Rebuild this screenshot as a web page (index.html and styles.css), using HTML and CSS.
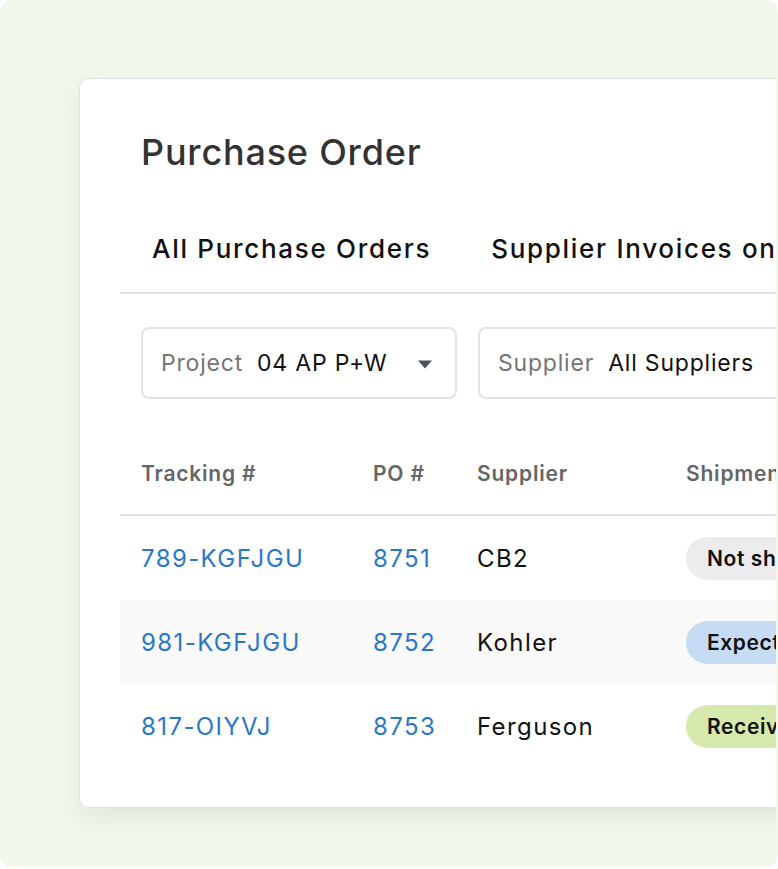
FILE: index.html
```html
<!DOCTYPE html>
<html>
<head>
<meta charset="utf-8">
<link rel="stylesheet" href="styles.css">
</head>
<body>
<div class="frame">
  <div class="viewport">
    <div class="card">
      <h1 class="title">Purchase Order</h1>
      <div class="tabs">
        <div class="tab">All Purchase Orders</div>
        <div class="tab">Supplier Invoices on Hold</div>
      </div>
      <div class="filters">
        <div class="select project">
          <span class="label">Project</span>
          <span class="value">04 AP P+W</span>
          <svg class="caret" width="16" height="9" viewBox="0 0 16 9"><path d="M1 0.5 H15 L8 8.5 Z" fill="#4b5358"/></svg>
        </div>
        <div class="select supplier">
          <span class="label">Supplier</span>
          <span class="value">All Suppliers</span>
        </div>
      </div>
      <div class="table">
        <div class="row head">
          <div class="cell c1">Tracking #</div>
          <div class="cell">PO #</div>
          <div class="cell">Supplier</div>
          <div class="cell">Shipment Status</div>
        </div>
        <div class="row">
          <div class="cell c1 link">789-KGFJGU</div>
          <div class="cell link">8751</div>
          <div class="cell">CB2</div>
          <div class="cell"><span class="chip grey">Not shipped</span></div>
        </div>
        <div class="row alt">
          <div class="cell c1 link">981-KGFJGU</div>
          <div class="cell link">8752</div>
          <div class="cell">Kohler</div>
          <div class="cell"><span class="chip blue">Expected</span></div>
        </div>
        <div class="row">
          <div class="cell c1 link">817-OIYVJ</div>
          <div class="cell link">8753</div>
          <div class="cell">Ferguson</div>
          <div class="cell"><span class="chip green">Received</span></div>
        </div>
      </div>
    </div>
  </div>
</div>
</body>
</html>
```
FILE: styles.css
```css
* { box-sizing: border-box; }
html, body { margin: 0; padding: 0; background: #ffffff; }
body { font-family: Inter, "Liberation Sans", sans-serif; }

.frame {
  width: 778px;
  height: 867px;
  background: #f3f8ed;
  border-radius: 12px;
  overflow: hidden;
}
.viewport {
  width: 776px;
  height: 100%;
  overflow: hidden;
  padding: 78px 0 0 79px;
}
.card {
  width: 900px;
  background: #ffffff;
  border: 1px solid #e1e1e1;
  border-radius: 10px;
  box-shadow: 0 10px 28px rgba(60, 80, 40, 0.10);
  padding-bottom: 39px;
}
.title {
  margin: 0;
  padding: 51px 61px 0;
  font-size: 36px;
  line-height: 44px;
  font-weight: 500;
  letter-spacing: 0.8px;
  color: #333333;
}
.tabs {
  display: flex;
  margin: 41px 0 0 40px;
  height: 79px;
  border-bottom: 2px solid #e4e4e4;
}
.tab {
  padding: 0 28px 0 32px;
  height: 68px;
  line-height: 68px;
  font-size: 26px;
  font-weight: 500;
  letter-spacing: 1.7px;
  color: #111111;
  white-space: nowrap;
}
.filters {
  display: flex;
  gap: 21px;
  margin: 33px 0 0 61px;
}
.select {
  height: 72px;
  border: 2px solid #e3e3e3;
  border-radius: 8px;
  display: flex;
  align-items: center;
  padding-left: 18px;
  font-size: 23px;
  letter-spacing: 0.8px;
  white-space: nowrap;
}
.project { width: 316px; padding-right: 22px; }
.supplier { width: 400px; }
.label { color: #757575; margin-right: 14px; }
.value { color: #111111; }
.caret { margin-left: auto; margin-top: 3px; }

.table { margin: 40px 0 0 40px; }
.row {
  display: grid;
  grid-template-columns: 253px 104px 209px 1fr;
  height: 84px;
  align-items: center;
  font-size: 24px;
  letter-spacing: 1.4px;
  color: #111111;
}
.row.head {
  height: 77px;
  align-items: start;
  padding-top: 22px;
  border-bottom: 2px solid #e4e4e4;
  font-size: 21px;
  font-weight: 600;
  letter-spacing: 0.8px;
  color: #666666;
}
.row.alt { background: #f9f9f9; }
.cell { white-space: nowrap; }
.c1 { padding-left: 21px; }
.link { color: #2a77c9; }
.chip {
  display: inline-block;
  height: 43px;
  line-height: 43px;
  padding: 0 21px;
  border-radius: 22px;
  font-size: 21px;
  font-weight: 600;
  letter-spacing: 0.6px;
  color: #111111;
}
.chip.grey { background: #ececef; }
.chip.blue { background: #c6dcf5; }
.chip.green { background: #d6e9ac; }
```
